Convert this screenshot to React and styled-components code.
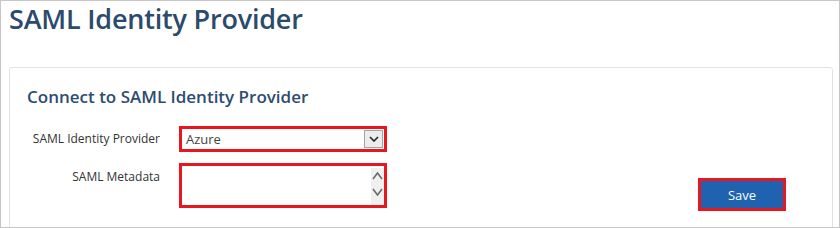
import styled, { createGlobalStyle } from 'styled-components';

const Global = createGlobalStyle`
  html, body {
    margin: 0;
    padding: 0;
    background: #fff;
  }
  * { box-sizing: border-box; }
`

const Frame = styled.div`
  width: 840px;
  height: 228px;
  border: 1px solid #c6c6c6;
  overflow: hidden;
  font-family: "Open Sans", "Liberation Sans", sans-serif;
`

const Title = styled.h1`
  margin: 0;
  padding: 2px 0 0 8px;
  font-size: 27px;
  line-height: 32px;
  font-weight: 600;
  color: #2b4a6c;
  letter-spacing: -0.2px;
`

const Card = styled.section`
  margin: 32px 6px 0 8px;
  border: 1px solid #e2e2e2;
  border-radius: 3px;
  padding: 18px 17px 40px 17px;
`

const Heading = styled.h2`
  margin: 0 0 19px 0;
  font-size: 17px;
  line-height: 21px;
  font-weight: 600;
  color: #2d4c6f;
`

const Row = styled.div`
  display: flex;
  align-items: ${p => (p.$top ? 'flex-start' : 'center')};
  margin-bottom: 11px;
`

const Label = styled.label`
  width: 133px;
  flex: none;
  text-align: right;
  white-space: nowrap;
  font-size: 12px;
  line-height: 16px;
  color: #333;
  margin-right: 19px;
  margin-top: ${p => p.$offset || 0}px;
`

const Highlight = styled.div`
  border: 3px solid #e8161f;
  width: ${p => p.$w}px;
  height: ${p => p.$h}px;
  background: #fff;
  flex: none;
`

const SelectBox = styled.div`
  display: flex;
  align-items: center;
  justify-content: space-between;
  height: 100%;
  padding: 0 1px 0 4px;
  font-size: 13px;
  color: #444;
`

const DropButton = styled.span`
  width: 19px;
  height: 18px;
  border: 1px solid #a3a3a3;
  background: #ececec;
  display: flex;
  align-items: center;
  justify-content: center;
`

const AreaBox = styled.div`
  display: flex;
  justify-content: flex-end;
  height: 100%;
  overflow: hidden;
`

const Track = styled.div`
  width: 13px;
  margin-top: 2px;
  background: #f0f0f0;
  display: flex;
  flex-direction: column;
  align-items: center;
  padding-top: 4px;
  gap: 8px;
`

const SaveWrap = styled.div`
  margin-left: auto;
  margin-right: 29px;
  margin-top: 15px;
  border: 3px solid #e8161f;
  flex: none;
`

const SaveButton = styled.button`
  display: block;
  width: 82px;
  height: 27px;
  border: none;
  background: #1e62b0;
  color: #fff;
  font-family: "Open Sans", "Liberation Sans", sans-serif;
  font-size: 13px;
  padding: 0;
`

const Chevron = ({ up, color = '#222', w = 10, h = 6 }) => (
  <svg width={w} height={h} viewBox={`0 0 ${w} ${h}`}>
    <path
      d={
        up
          ? `M1 ${h - 1} L${w / 2} 1 L${w - 1} ${h - 1}`
          : `M1 1 L${w / 2} ${h - 1} L${w - 1} 1`
      }
      fill="none"
      stroke={color}
      strokeWidth="1.6"
    />
  </svg>
)

export default function App() {
  return (
    <Frame>
      <Global />
      <Title>SAML Identity Provider</Title>
      <Card>
        <Heading>Connect to SAML Identity Provider</Heading>
        <Row>
          <Label>SAML Identity Provider</Label>
          <Highlight $w={208} $h={26}>
            <SelectBox>
              Azure
              <DropButton>
                <Chevron />
              </DropButton>
            </SelectBox>
          </Highlight>
        </Row>
        <Row $top>
          <Label $offset={6}>SAML Metadata</Label>
          <Highlight $w={208} $h={45}>
            <AreaBox>
              <Track>
                <Chevron up color="#6a6a6a" w={11} h={8} />
                <Chevron color="#6a6a6a" w={11} h={8} />
              </Track>
            </AreaBox>
          </Highlight>
          <SaveWrap>
            <SaveButton>Save</SaveButton>
          </SaveWrap>
        </Row>
      </Card>
    </Frame>
  );
}
